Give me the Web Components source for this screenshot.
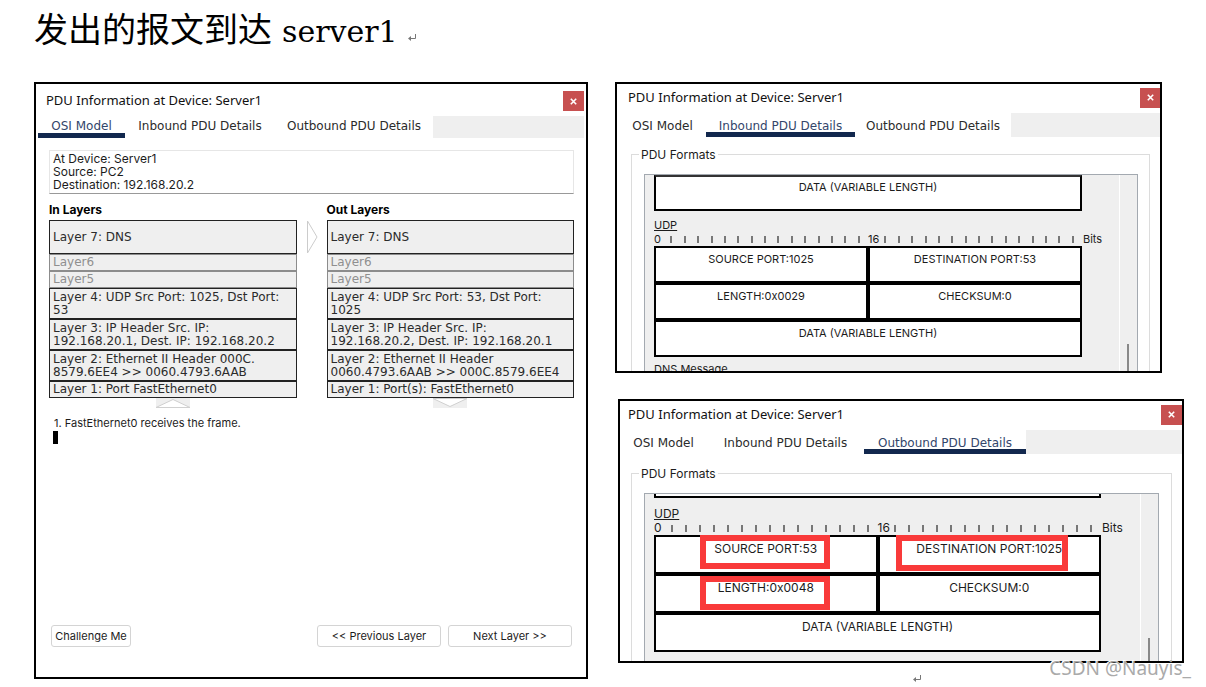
<!DOCTYPE html>
<html lang="zh-CN">
<head>
<meta charset="utf-8">
<title>发出的报文到达 server1</title>
<style>
  body { margin: 0; background: #fff; color: #1c1c1c; font: 11px/13px Inter, "Liberation Sans", sans-serif; }
</style>
</head>
<body>
<doc-page>
  <doc-heading slot="heading"><span>发出的报文到达</span> server1</doc-heading>
  <pdu-window slot="left" class="osi" active="0">
    <osi-panel>
      <layer-stack slot="in" heading="In Layers" dir-arrow="up"
        layers="Layer 7: DNS|Layer6|Layer5|Layer 4: UDP Src Port: 1025, Dst Port: 53|Layer 3: IP Header Src. IP: 192.168.20.1, Dest. IP: 192.168.20.2|Layer 2: Ethernet II Header 000C.&#8203;8579.6EE4 &gt;&gt; 0060.4793.6AAB|Layer 1: Port FastEthernet0"></layer-stack>
      <layer-stack slot="out" heading="Out Layers" dir-arrow="down"
        layers="Layer 7: DNS|Layer6|Layer5|Layer 4: UDP Src Port: 53, Dst Port: 1025|Layer 3: IP Header Src. IP: 192.168.20.2, Dest. IP: 192.168.20.1|Layer 2: Ethernet II Header 0060.4793.6AAB &gt;&gt; 000C.8579.6EE4|Layer 1: Port(s): FastEthernet0"></layer-stack>
    </osi-panel>
  </pdu-window>
  <pdu-window slot="right" class="inbound" active="1">
    <pdu-formats src="1025" dst="53" len="0x0029" top-text="DATA (VARIABLE LENGTH)"></pdu-formats>
  </pdu-window>
  <pdu-window slot="right" class="outbound" active="2">
    <pdu-formats src="53" dst="1025" len="0x0048" marked></pdu-formats>
  </pdu-window>
</doc-page>

<script>
const make = (host, html) => {
  const t = document.createElement('template');
  t.innerHTML = html;
  host.attachShadow({ mode: 'open' }).append(t.content.cloneNode(true));
};

customElements.define('return-mark', class extends HTMLElement {
  constructor() {
    super();
    make(this, `<style>:host{display:inline-block;width:8px;height:8px}svg{display:block}</style>
      <svg width="8" height="8" viewBox="0 0 8 8" fill="none" stroke="#777" aria-hidden="true"><path d="M7.5 0V4.5H1"/><path d="M0 4.5L3 2V7Z" fill="#777" stroke="none"/></svg>`);
  }
});

customElements.define('doc-heading', class extends HTMLElement {
  constructor() {
    super();
    make(this, `<style>
      :host{display:block}
      h1{margin:0;display:flex;align-items:baseline;color:#000;font:400 30px/40px "DejaVu Serif",serif}
      ::slotted(span){font:400 34px/40px "Noto Sans CJK SC",sans-serif;margin-right:10px}
      return-mark{margin:0 0 2px 10px}
    </style><h1><slot></slot><return-mark></return-mark></h1>`);
  }
});

customElements.define('doc-page', class extends HTMLElement {
  constructor() {
    super();
    make(this, `<style>
      :host{display:block;position:relative;padding:8px 22px 0 34px}
      main{display:grid;grid-template-columns:554fr 569fr;column-gap:27px;align-items:start;margin-top:30px}
      .col{display:flex;flex-direction:column;gap:26px;min-width:0}
      ::slotted(.inbound){margin-right:22px}
      ::slotted(.outbound){margin-left:3px}
      .end{margin:-14px 0 0 298px;line-height:8px}
      .mark{position:absolute;right:15px;bottom:3px;font:19px/24px "Noto Sans",sans-serif;color:#aaa;text-shadow:-1px -1px 0 #fff}
    </style>
    <slot name="heading"></slot>
    <main>
      <slot name="left"></slot>
      <div class="col"><slot name="right"></slot><div class="end"><return-mark></return-mark></div></div>
    </main>
    <div class="mark">CSDN @Nauyis_</div>`);
  }
});

customElements.define('pdu-window', class extends HTMLElement {
  constructor() {
    super();
    make(this, `<style>
      :host{display:flex;flex-direction:column;box-sizing:border-box;border:2px solid #000;background:#fff;overflow:hidden;
        --head:29px;--lift:4px;--strip:24px;--drop:6px;--edge:0px;--t1:87px;--t2:149px;--t3:156px}
      :host(.osi){min-height:597px;--head:32px;--lift:0px;--strip:22px;--drop:3px;--edge:2px;--t2:150px;--t3:158px}
      :host(.inbound){height:291px}
      :host(.inbound) .tabs{padding-left:2px}
      :host(.inbound) .head{padding-left:11px}
      :host(.inbound) .close{margin-right:-1px}
      :host(.outbound){height:264px;--t2:157px;--t3:162px}
      :host(.outbound) .head{padding-left:8px}
      .head{display:flex;align-items:center;justify-content:space-between;box-sizing:border-box;height:var(--head);padding:0 var(--edge) var(--lift) 10px}
      h2{margin:0;font:400 13px/16px "Noto Sans","Open Sans",sans-serif;color:#111}
      .close{width:21px;height:20px;margin-top:2px;padding:0;border:0;background:#c75050;display:grid;place-items:center}
      .tabs{display:flex;height:var(--strip);padding:0 var(--edge)}
      .tabs button{box-sizing:border-box;border:0;border-bottom:5px solid transparent;background:none;padding:var(--drop) 0 0;white-space:nowrap;
        font:12px/14px "DejaVu Sans",sans-serif;color:#2b2b2b}
      .tabs button:nth-child(1){width:var(--t1)}
      .tabs button:nth-child(2){width:var(--t2)}
      .tabs button:nth-child(3){width:var(--t3)}
      .tabs button[aria-selected=true]{border-color:#12284e;color:#33466b}
      .rest{flex:1;background:#efefef}
      .body{flex:1;min-height:0;display:flex;flex-direction:column}
    </style>
    <div class="head"><h2>PDU Information at Device: Server1</h2>
      <button class="close" aria-label="Close"><svg width="7" height="7" viewBox="0 0 7 7" stroke="#fff" stroke-width="1.6"><path d="M.8 .8L6.2 6.2M6.2 .8L.8 6.2"/></svg></button></div>
    <div class="tabs" role="tablist">
      <button role="tab">OSI Model</button><button role="tab">Inbound PDU Details</button><button role="tab">Outbound PDU Details</button>
      <div class="rest"></div>
    </div>
    <div class="body"><slot></slot></div>`);
  }
  connectedCallback() {
    this.shadowRoot.querySelectorAll('[role=tab]').forEach((b, i) =>
      b.setAttribute('aria-selected', String(i === +this.getAttribute('active'))));
  }
});

customElements.define('layer-stack', class extends HTMLElement {
  constructor() {
    super();
    make(this, `<style>
      :host{display:block}
      h3{margin:0 0 4px;font:700 12px/13px Inter,sans-serif;color:#000}
      ol{list-style:none;margin:0;padding:0;font:12px/13px "DejaVu Sans",sans-serif}
      li{box-sizing:border-box;min-height:17px;padding:1px 3px;border:1px solid #222;background:#efefef;color:#2b2b2b}
      li.first{min-height:34px;padding-top:2px;display:flex;align-items:center}
      li.off{border-color:#8c8c8c;color:#8f8f8f}
      li.two{min-height:31px;padding-top:2px}
      svg{display:block;margin:0 auto}
    </style><h3></h3><ol></ol>
    <svg width="34" height="10" viewBox="0 0 34 10"><rect width="34" height="10" fill="#efefef"/><path fill="#fff" stroke="#d0d0d0"/></svg>`);
  }
  connectedCallback() {
    const r = this.shadowRoot;
    r.querySelector('h3').textContent = this.getAttribute('heading');
    this.getAttribute('layers').split('|').forEach((text, i) => {
      const li = document.createElement('li');
      li.textContent = text;
      li.className = i === 0 ? 'first' : i < 3 ? 'off' : i < 6 ? 'two' : '';
      r.querySelector('ol').append(li);
    });
    r.querySelector('path').setAttribute('d', this.getAttribute('dir-arrow') === 'up'
      ? 'M0 9.5L17 1.5L34 9.5Z' : 'M0 .5L17 8.5L34 .5Z');
  }
});

customElements.define('osi-panel', class extends HTMLElement {
  constructor() {
    super();
    make(this, `<style>
      :host{display:flex;flex-direction:column;flex:1;padding:12px 12px 30px 13px}
      .info{padding:1px 3px 2px;border:1px solid #e6e6e6;border-bottom-color:#999;white-space:pre-line;font-size:12px}
      .cols{display:grid;grid-template-columns:1fr 30px 1fr;margin-top:9px}
      .arrow{display:block;margin:17px 0 0 10px}
      .note{margin:9px 5px 0}
      .caret{width:5px;height:13px;margin:1px 0 0 4px;background:#000}
      .foot{display:flex;gap:7px;margin:auto 2px 0}
      .foot button{height:22px;width:124px;padding:0;border:1px solid #d4d4d4;border-radius:3px;background:#fff;font:11px/13px Inter,sans-serif;color:#1c1c1c;white-space:nowrap}
      .foot .c{width:80px;margin-right:auto}
    </style>
    <div class="info">At Device: Server1
Source: PC2
Destination: 192.168.20.2</div>
    <div class="cols"><slot name="in"></slot>
      <svg class="arrow" width="11" height="34" viewBox="0 0 11 34"><path d="M.5 1L10 17L.5 33Z" fill="#fff" stroke="#ccc"/></svg>
      <slot name="out"></slot></div>
    <div class="note">1. FastEthernet0 receives the frame.</div>
    <div class="caret"></div>
    <div class="foot"><button class="c">Challenge Me</button><button>&lt;&lt; Previous Layer</button><button>Next Layer &gt;&gt;</button></div>`);
  }
});

customElements.define('bit-ruler', class extends HTMLElement {
  constructor() {
    super();
    const half = n => `<span>${n}</span>` + '<i></i>'.repeat(15);
    make(this, `<style>
      :host{display:grid;grid-template-columns:repeat(32,minmax(0,1fr));height:14px;line-height:14px}
      span{white-space:nowrap}
      i{width:2px;height:7px;margin:4px 0 0 3px;background:#777}
    </style>${half(0)}${half(16)}`);
  }
});

customElements.define('pdu-formats', class extends HTMLElement {
  constructor() {
    super();
    make(this, `<style>
      :host{flex:1;display:flex;min-height:0;--row:37px;--lead:36px;--gap:7px;--bits:36px;--text:11px}
      :host([marked]){--row:39px;--lead:4px;--gap:9px;--bits:38px;--text:12px}
      fieldset{flex:1;min-width:0;margin:11px 10px 0 14px;padding:13px 11px 0 12px;border:1px solid #dcdcdc;border-bottom:0;display:flex;font-size:var(--text)}
      :host([marked]) fieldset{margin:13px 10px 0 11px;padding:13px 12px 0}
      legend{margin-left:-5px;padding:0 2px;font-size:12px}
      .view{flex:1;min-width:0;display:flex;border:1px solid #a3a9b0;border-bottom:0;background:#efefef}
      .sheet{flex:1;min-width:0;padding-left:9px}
      .track{box-sizing:border-box;width:18px;border-left:1px solid #fff;padding:169px 0 0 7px}
      :host([marked]) .track{padding-top:144px}
      .thumb{width:2px;height:80px;background:#888}
      .line{display:flex;gap:1px}
      .grow{flex:1;min-width:0}
      .bits{width:var(--bits);line-height:14px}
      table{width:100%;border-collapse:separate;border-spacing:0;table-layout:fixed}
      td{box-sizing:border-box;height:var(--row);border:2px solid #000;background:#fff;padding:5px 0 0;text-align:center;vertical-align:top;position:relative;white-space:nowrap}
      .lead td{height:var(--lead);padding-top:4px;border-top-color:#333}
      :host([marked]) .lead td{border-top:0;padding:0}
      h4{margin:var(--gap) 0 0;font:var(--text)/14px Inter,sans-serif;text-decoration:underline}
      .dns{margin-top:6px;text-decoration:underline}
      .red{display:none}
      :host([marked]) .red{display:block;position:absolute;box-sizing:border-box;border:6px solid #f93a3a;width:130px;height:34px;left:calc(50% - 66px);top:-2px}
      :host([marked]) .red.wide{width:172px;height:36px;left:calc(50% - 93px)}
      :host([marked]) .red.low{top:0}
    </style>
    <fieldset><legend>PDU Formats</legend>
      <div class="view"><div class="sheet">
        <div class="line"><table class="lead grow"><tbody><tr><td></td></tr></tbody></table><span class="bits"></span></div>
        <h4>UDP</h4>
        <div class="line"><bit-ruler class="grow"></bit-ruler><span class="bits">Bits</span></div>
        <div class="line"><table class="grow"><tbody>
          <tr><td>SOURCE PORT:<span id="s"></span><div class="red"></div></td><td>DESTINATION PORT:<span id="d"></span><div class="red wide"></div></td></tr>
          <tr><td>LENGTH:<span id="l"></span><div class="red low"></div></td><td>CHECKSUM:0</td></tr>
          <tr><td colspan="2">DATA (VARIABLE LENGTH)</td></tr>
        </tbody></table><span class="bits"></span></div>
        <div class="dns"></div>
      </div><div class="track"><div class="thumb"></div></div></div>
    </fieldset>`);
  }
  connectedCallback() {
    const $ = q => this.shadowRoot.querySelector(q);
    $('#s').textContent = this.getAttribute('src');
    $('#d').textContent = this.getAttribute('dst');
    $('#l').textContent = this.getAttribute('len');
    $('.lead td').textContent = this.getAttribute('top-text') || '';
    if (!this.hasAttribute('marked')) $('.dns').textContent = 'DNS Message';
  }
});
</script>
</body>
</html>
